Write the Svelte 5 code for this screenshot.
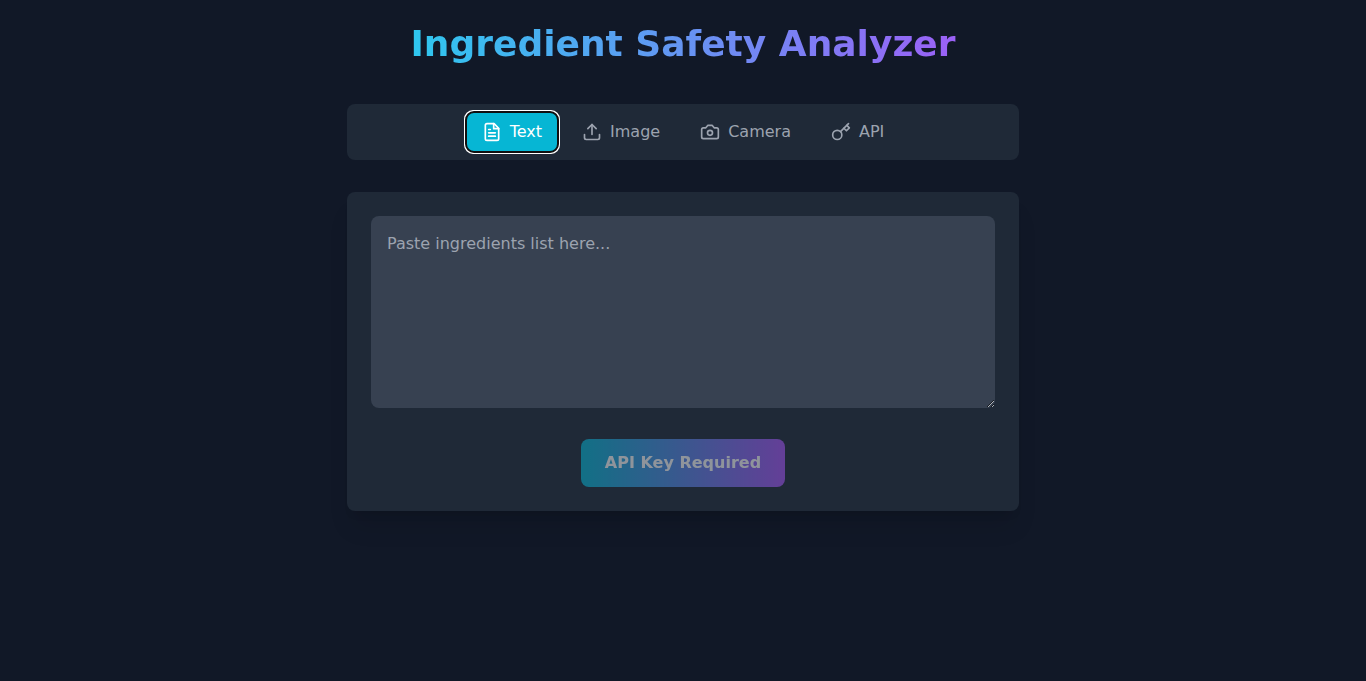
<script>
  let active = $state('Text');
  let ingredients = $state('');
  const tabs = ['Text', 'Image', 'Camera', 'API'];
</script>

<div class="page">
  <main>
    <h1>Ingredient Safety Analyzer</h1>

    <nav>
      {#each tabs as tab}
        <button class="tab" class:active={active === tab} onclick={() => (active = tab)}>
          <svg width="20" height="20" viewBox="0 0 24 24" fill="none" stroke="currentColor" stroke-width="2" stroke-linecap="round" stroke-linejoin="round">
            {#if tab === 'Text'}
              <path d="M14.5 2H6a2 2 0 0 0-2 2v16a2 2 0 0 0 2 2h12a2 2 0 0 0 2-2V7.5L14.5 2z" />
              <polyline points="14 2 14 8 20 8" />
              <line x1="16" x2="8" y1="13" y2="13" />
              <line x1="16" x2="8" y1="17" y2="17" />
              <line x1="10" x2="8" y1="9" y2="9" />
            {:else if tab === 'Image'}
              <path d="M21 15v4a2 2 0 0 1-2 2H5a2 2 0 0 1-2-2v-4" />
              <polyline points="17 8 12 3 7 8" />
              <line x1="12" x2="12" y1="3" y2="15" />
            {:else if tab === 'Camera'}
              <path d="M14.5 4h-5L7 7H4a2 2 0 0 0-2 2v9a2 2 0 0 0 2 2h16a2 2 0 0 0 2-2V9a2 2 0 0 0-2-2h-3l-2.5-3z" />
              <circle cx="12" cy="13" r="3" />
            {:else}
              <circle cx="7.5" cy="15.5" r="5.5" />
              <path d="m21 2-9.6 9.6" />
              <path d="m15.5 7.5 3 3L22 7l-3-3" />
            {/if}
          </svg>
          <span>{tab}</span>
        </button>
      {/each}
    </nav>

    <section>
      <textarea placeholder="Paste ingredients list here..." bind:value={ingredients}></textarea>
      <div class="actions">
        <button class="analyze" disabled>API Key Required</button>
      </div>
    </section>
  </main>
</div>

<style>
  :global(body) {
    background: #111827;
  }
  .page,
  .page * {
    box-sizing: border-box;
  }
  .page {
    min-height: 100vh;
    padding: 24px;
    background: #111827;
    color: #fff;
    font-family: "DejaVu Sans", sans-serif;
    font-size: 16px;
    line-height: 24px;
  }
  main {
    max-width: 672px;
    margin: 0 auto;
  }
  h1 {
    margin: 0 0 40px;
    font-size: 36px;
    line-height: 40px;
    font-weight: 700;
    text-align: center;
    color: transparent;
    background: linear-gradient(to right, #22d3ee, #a855f7);
    background-clip: text;
    -webkit-background-clip: text;
  }
  nav {
    display: flex;
    justify-content: center;
    gap: 8px;
    margin-bottom: 32px;
    padding: 8px;
    border-radius: 8px;
    background: #1f2937;
  }
  button {
    border: 0;
    font: inherit;
    cursor: pointer;
  }
  .tab {
    display: flex;
    align-items: center;
    gap: 8px;
    padding: 8px 16px;
    border-radius: 8px;
    background: transparent;
    color: #9ca3af;
  }
  .tab.active {
    background: #06b6d4;
    color: #fff;
    outline: -webkit-focus-ring-color auto 1px;
  }
  section {
    padding: 24px;
    border-radius: 8px;
    background: #1f2937;
    box-shadow: 0 20px 25px -5px rgb(0 0 0 / 0.1), 0 8px 10px -6px rgb(0 0 0 / 0.1);
  }
  textarea {
    width: 100%;
    height: 192px;
    margin: 0;
    padding: 16px;
    border: 0;
    border-radius: 8px;
    background: #374151;
    color: #fff;
    font: inherit;
    resize: vertical;
  }
  textarea::placeholder {
    color: #9ca3af;
  }
  .actions {
    display: flex;
    justify-content: center;
    margin-top: 24px;
  }
  .analyze {
    padding: 12px 24px;
    border-radius: 8px;
    background: linear-gradient(to right, #06b6d4, #a855f7);
    color: #fff;
    font-weight: 700;
    opacity: 0.5;
    cursor: not-allowed;
  }
</style>
